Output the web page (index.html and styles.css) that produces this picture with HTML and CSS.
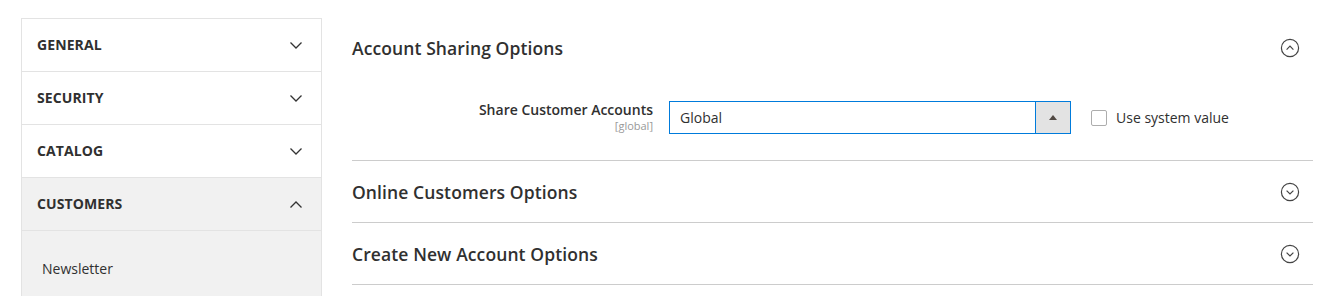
FILE: index.html
```html
<!DOCTYPE html>
<html lang="en">
  <head>
    <meta charset="UTF-8">
    <title>Configuration - Customers</title>
    <link rel="stylesheet" href="styles.css">
  </head>
  <body>
    <div class="page">
      <!-- left config tabs -->
      <nav class="tabs">
        <div class="tab">
          <span class="tab-title">General</span>
          <svg class="chev" viewBox="0 0 12 7"><path d="M0.5 0.5 L6 6 L11.5 0.5"/></svg>
        </div>
        <div class="tab">
          <span class="tab-title">Security</span>
          <svg class="chev" viewBox="0 0 12 7"><path d="M0.5 0.5 L6 6 L11.5 0.5"/></svg>
        </div>
        <div class="tab">
          <span class="tab-title">Catalog</span>
          <svg class="chev" viewBox="0 0 12 7"><path d="M0.5 0.5 L6 6 L11.5 0.5"/></svg>
        </div>
        <div class="tab tab-open">
          <span class="tab-title">Customers</span>
          <svg class="chev" viewBox="0 0 12 7"><path d="M0.5 6.5 L6 1 L11.5 6.5"/></svg>
        </div>
        <ul class="tab-items">
          <li>Newsletter</li>
        </ul>
      </nav>

      <main class="content">
        <section class="section">
          <div class="section-head">
            <h2>Account Sharing Options</h2>
            <svg class="circle-btn" viewBox="0 0 20 20"><circle cx="10" cy="10" r="8.6"/><path d="M6.6 11.6 L10 8.2 L13.4 11.6"/></svg>
          </div>
          <div class="field-row">
            <div class="field-label">
              <span class="label-text">Share Customer Accounts</span>
              <span class="scope">[global]</span>
            </div>
            <div class="select">
              <span class="select-value">Global</span>
              <span class="select-btn"><span class="tri"></span></span>
            </div>
            <label class="use-default">
              <span class="checkbox"></span>
              <span>Use system value</span>
            </label>
          </div>
        </section>
        <section class="section">
          <div class="section-head">
            <h2>Online Customers Options</h2>
            <svg class="circle-btn" viewBox="0 0 20 20"><circle cx="10" cy="10" r="8.6"/><path d="M6.6 8.6 L10 12 L13.4 8.6"/></svg>
          </div>
        </section>
        <section class="section">
          <div class="section-head">
            <h2>Create New Account Options</h2>
            <svg class="circle-btn" viewBox="0 0 20 20"><circle cx="10" cy="10" r="8.6"/><path d="M6.6 8.6 L10 12 L13.4 8.6"/></svg>
          </div>
        </section>
      </main>
    </div>
  </body>
</html>
```

FILE: styles.css
```css
body {
  margin: 0;
  font-family: "Open Sans", "Liberation Sans", sans-serif;
  color: #303030;
  background: #fff;
}

.page {
  display: flex;
  align-items: flex-start;
  padding: 18px 24px 0 21px;
}

/* config tabs */
.tabs {
  width: 301px;
  flex: none;
  border: 1px solid #e3e3e3;
  border-bottom: 0;
  height: 300px;
  box-sizing: border-box;
  background: #f1f1f1;
}

.tab {
  display: flex;
  align-items: center;
  justify-content: space-between;
  height: 52px;
  padding: 0 19px 0 15px;
  border-bottom: 1px solid #e3e3e3;
  background: #fff;
}

.tab-open {
  background: #f1f1f1;
}

.tab-title {
  font-size: 14px;
  font-weight: 700;
  text-transform: uppercase;
  letter-spacing: 0.1px;
  line-height: 18px;
  margin-top: -1px;
}

.chev {
  width: 12px;
  height: 7px;
  fill: none;
  stroke: #333;
  stroke-width: 1.3;
}

.tab-items {
  list-style: none;
  margin: 0;
  padding: 28px 0 0 20px;
  font-size: 14px;
}

/* main area */
.content {
  flex: 1;
  margin: -1px 0 0 30px;
}

.section {
  border-bottom: 1px solid #cccccc;
}

.section-head {
  display: flex;
  align-items: center;
  justify-content: space-between;
  height: 61px;
  padding-right: 13px;
}

.section-head h2 {
  margin: 0;
  font-size: 17.5px;
  font-weight: 600;
  letter-spacing: 0.1px;
}

.circle-btn {
  width: 20px;
  height: 20px;
  fill: none;
  stroke: #444;
  stroke-width: 1.2;
}

.field-row {
  display: grid;
  grid-template-columns: 301px 402px auto;
  column-gap: 16px;
  padding: 23px 0 26px;
  align-items: start;
}

.field-label {
  display: flex;
  flex-direction: column;
  align-items: flex-end;
}

.label-text {
  font-size: 14px;
  font-weight: 600;
  line-height: 18px;
}

.scope {
  font-size: 11px;
  color: #999;
  line-height: 14px;
}

.select {
  display: flex;
  height: 33px;
  box-sizing: border-box;
  border: 1px solid #007bdb;
}

.select-value {
  flex: 1;
  padding-left: 10px;
  font-size: 14px;
  line-height: 31px;
}

.select-btn {
  width: 34px;
  border-left: 1px solid #007bdb;
  background: #e3e3e3;
  display: flex;
  align-items: center;
  justify-content: center;
}

.tri {
  width: 0;
  height: 0;
  border-left: 4px solid transparent;
  border-right: 4px solid transparent;
  border-bottom: 5px solid #514943;
}

.use-default {
  display: flex;
  align-items: center;
  gap: 9px;
  margin-left: 4px;
  height: 33px;
  font-size: 14px;
}

.checkbox {
  width: 16px;
  height: 16px;
  box-sizing: border-box;
  border: 1px solid #adadad;
  border-radius: 2px;
  background: #fff;
}
```
